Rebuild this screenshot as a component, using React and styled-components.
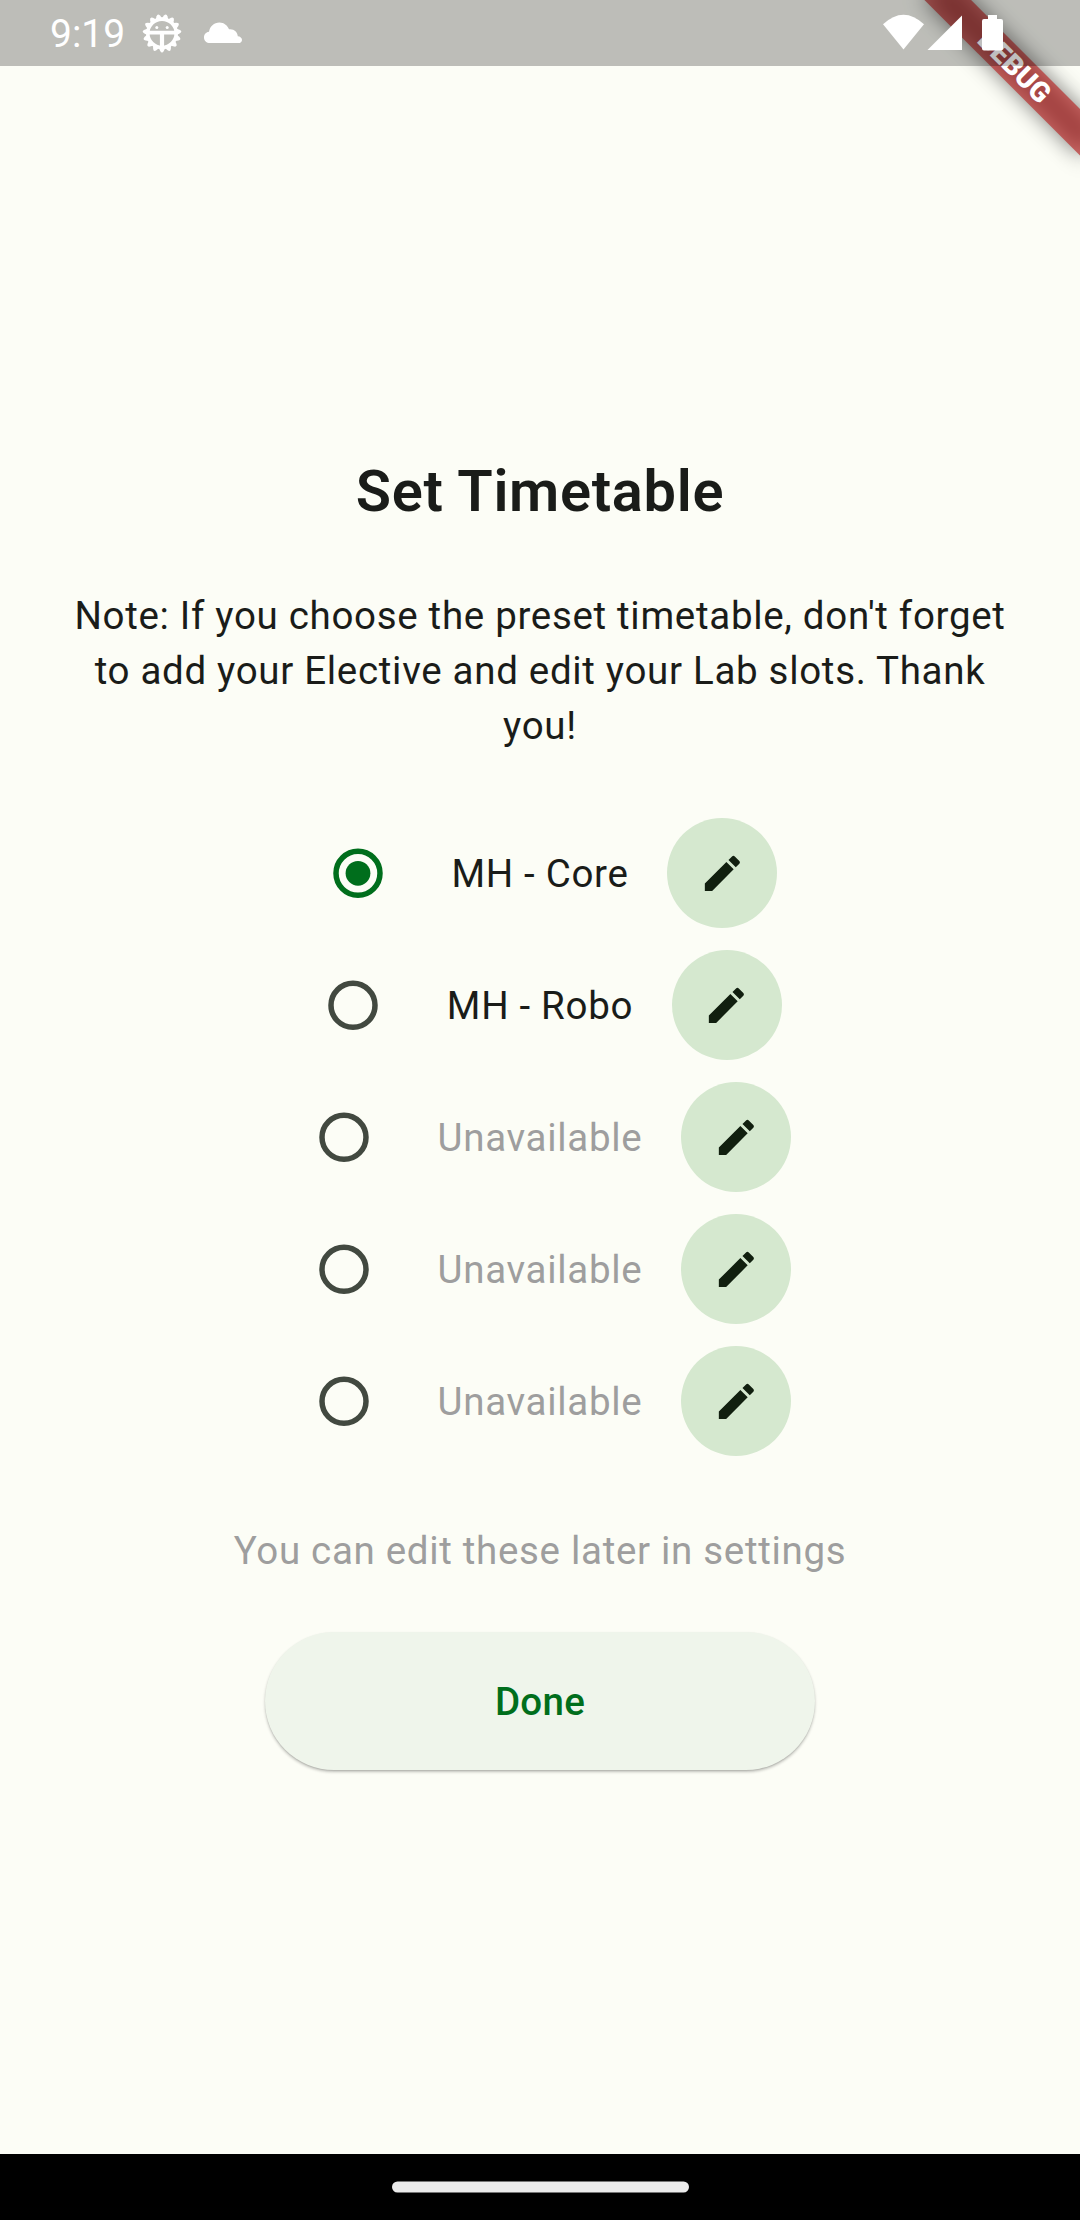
import React, { useState } from "react";
import styled, { createGlobalStyle } from "styled-components";

const GlobalStyle = createGlobalStyle`
  * { box-sizing: border-box; }
  body {
    margin: 0;
    background: #fcfdf6;
    font-family: Roboto, "Liberation Sans", sans-serif;
    -webkit-font-smoothing: antialiased;
  }
  button { font: inherit; border: 0; padding: 0; cursor: pointer; }
`;

const Screen = styled.div`
  position: relative;
  display: flex;
  flex-direction: column;
  width: 1080px;
  height: 2220px;
  overflow: hidden;
  background: #fcfdf6;
  color: #1a1c19;
`;

const StatusBar = styled.header`
  position: relative;
  z-index: 2;
  flex: none;
  display: flex;
  justify-content: space-between;
  height: 66px;
  padding: 0 76px 0 50px;
  background: rgba(0, 0, 0, 0.25);
  color: #fff;
`;

const StatusGroup = styled.div`
  display: flex;
  align-items: center;
`;

const Clock = styled.span`
  width: 91.5px;
  font-size: 39px;
  line-height: 66px;
  padding-top: 2px;
`;

const StatusIcon = styled.svg`
  display: block;
  flex: none;
  fill: #fff;
`;

const CloudIcon = styled(StatusIcon)`
  margin-left: 22px;
`;

const BannerLayer = styled.div`
  position: absolute;
  z-index: 1;
  top: 0;
  left: 1080px;
  width: 0;
  height: 0;
  transform: rotate(45deg);
`;

const BannerShadow = styled.div`
  position: absolute;
  left: -110px;
  top: 77px;
  width: 220px;
  height: 33px;
  background: rgba(0, 0, 0, 0.5);
  filter: blur(10.9px);
`;

const BannerRibbon = styled.div`
  position: absolute;
  left: -110px;
  top: 77px;
  width: 220px;
  height: 33px;
  padding-left: 1.5px;
  background: rgba(183, 28, 28, 0.627);
  color: #fff;
  font-size: 28.05px;
  font-weight: 900;
  line-height: 33px;
  text-align: center;
`;

const Main = styled.main`
  flex: 1;
  display: flex;
  flex-direction: column;
  align-items: center;
  padding-top: 386px;
`;

const Title = styled.h1`
  margin: 0;
  font-size: 57.75px;
  font-weight: 600;
  line-height: 78px;
  letter-spacing: 0.6875px;
`;

const Note = styled.p`
  width: 960px;
  margin: 58px 0 0;
  font-size: 38.5px;
  line-height: 55px;
  letter-spacing: 0.6875px;
  text-align: center;
`;

const Options = styled.div`
  display: flex;
  flex-direction: column;
  align-items: center;
  margin-top: 54px;
`;

const OptionRow = styled.div`
  display: flex;
  align-items: center;
  height: 132px;
`;

const RadioTarget = styled.button`
  display: grid;
  place-items: center;
  width: 132px;
  height: 132px;
  margin-right: 27.5px;
  background: none;
`;

const Label = styled.span`
  font-size: 38.5px;
  line-height: 55px;
  letter-spacing: 0.6875px;
  color: ${(p) => (p.$muted ? "#9e9e9e" : "#1a1c19")};
`;

const EditButton = styled.button`
  display: grid;
  place-items: center;
  width: 110px;
  height: 110px;
  margin: 0 11px 0 38.5px;
  border-radius: 50%;
  background: #d5e8cf;
`;

const Hint = styled.p`
  margin: 56px 0 0;
  font-size: 38.5px;
  line-height: 55px;
  letter-spacing: 0.6875px;
  color: #9e9e9e;
`;

const DoneButton = styled.button`
  && {
    width: 550px;
    height: 138px;
    margin-top: 54px;
    border-radius: 69px;
    background: #eff5eb;
    color: #006e1c;
    font-size: 38.5px;
    font-weight: 500;
    letter-spacing: 0.275px;
    box-shadow: 0 2px 3px rgba(0, 0, 0, 0.24), 0 1px 1px rgba(0, 0, 0, 0.08);
  }
`;

const NavBar = styled.footer`
  flex: none;
  display: flex;
  justify-content: center;
  height: 66px;
  padding-top: 27px;
  background: #000;
`;

const NavHandle = styled.div`
  width: 297px;
  height: 11px;
  border-radius: 5.5px;
  background: #ebebeb;
  transform: translateY(0.5px);
`;

function Radio({ selected, onSelect, label }) {
  const color = selected ? "#006e1c" : "#424940";
  return (
    <RadioTarget role="radio" aria-checked={selected} aria-label={label} onClick={onSelect}>
      <svg width="52" height="52" viewBox="-26 -26.300 52 52">
        <circle r="22" fill="none" stroke={color} strokeWidth="5.5" />
        {selected && <circle r="12.375" fill={color} />}
      </svg>
    </RadioTarget>
  );
}

function Pencil() {
  return (
    <svg width="46.75" height="46.75" viewBox="0 0 24 24" fill="#111f0f">
      <path d="M3 17.25V21h3.75L17.81 9.94l-3.75-3.75L3 17.25zM20.71 7.04c.39-.39.39-1.02 0-1.41l-2.34-2.34c-.39-.39-1.02-.39-1.41 0l-1.83 1.83 3.75 3.75 1.83-1.83z" />
    </svg>
  );
}

const TEETH = Array.from({ length: 15 }, (_, i) => 12 + i * 24);

function GearFace() {
  return (
    <StatusIcon width="40" height="40" viewBox="-20 -20.300 40 40">
      <circle r="14.2" fill="none" stroke="#fff" strokeWidth="3.6" />
      {TEETH.map((a) => (
        <path key={a} d="M-3.1 -15L-1.8 -17.8Q0 -20.800 1.8 -17.8L3.1 -15Z" transform={`rotate(${a})`} />
      ))}
      <path d="M-14 -2.600H14V1.300H2.100V15H-2.100V1.300H-14Z" />
      <circle cx="-5.200" cy="-5.900" r="1.5" />
      <circle cx="5.200" cy="-5.900" r="1.5" />
    </StatusIcon>
  );
}

function Cloud() {
  return (
    <CloudIcon width="38" height="22" viewBox="0 0 38 22">
      <path d="M6 21C2.600 21 0 18.600 0 15.400C0 12.300 2.200 10.200 5 9.800C5.800 4.500 10 0.500 15.500 0.500C19.800 0.500 23.300 3.300 25 7.200C30 6.600 33.400 9.700 33.800 14.200C36.200 14.400 38 15.800 38 17.900C38 19.800 36.400 21 34.500 21Z" />
    </CloudIcon>
  );
}

function DeviceStatus() {
  return (
    <StatusIcon width="122" height="40" viewBox="882 13 122 40">
      <path d="M883 24.300Q903.500 5.200 924 24.300L903.500 49.500Z" />
      <path d="M962 15.500V50H927.500Z" />
      <path d="M988 15H997V19H1001Q1003 19 1003 21V48.500Q1003 50.500 1001 50.500H984Q982 50.500 982 48.500V21Q982 19 984 19H988Z" />
    </StatusIcon>
  );
}

const OPTIONS = ["MH - Core", "MH - Robo", null, null, null];

export default function App() {
  const [selected, setSelected] = useState(0);
  return (
    <Screen>
      <GlobalStyle />
      <StatusBar>
        <StatusGroup>
          <Clock>9:19</Clock>
          <GearFace />
          <Cloud />
        </StatusGroup>
        <StatusGroup>
          <DeviceStatus />
        </StatusGroup>
      </StatusBar>
      <BannerLayer>
        <BannerShadow />
        <BannerRibbon>DEBUG</BannerRibbon>
      </BannerLayer>
      <Main>
        <Title>Set Timetable</Title>
        <Note>
          Note: If you choose the preset timetable, don't forget to add your Elective and edit your Lab slots. Thank you!
        </Note>
        <Options role="radiogroup">
          {OPTIONS.map((name, i) => (
            <OptionRow key={i}>
              <Radio selected={selected === i} onSelect={() => setSelected(i)} label={name || "Unavailable"} />
              <Label $muted={!name}>{name || "Unavailable"}</Label>
              <EditButton aria-label="Edit">
                <Pencil />
              </EditButton>
            </OptionRow>
          ))}
        </Options>
        <Hint>You can edit these later in settings</Hint>
        <DoneButton>Done</DoneButton>
      </Main>
      <NavBar>
        <NavHandle />
      </NavBar>
    </Screen>
  );
}
